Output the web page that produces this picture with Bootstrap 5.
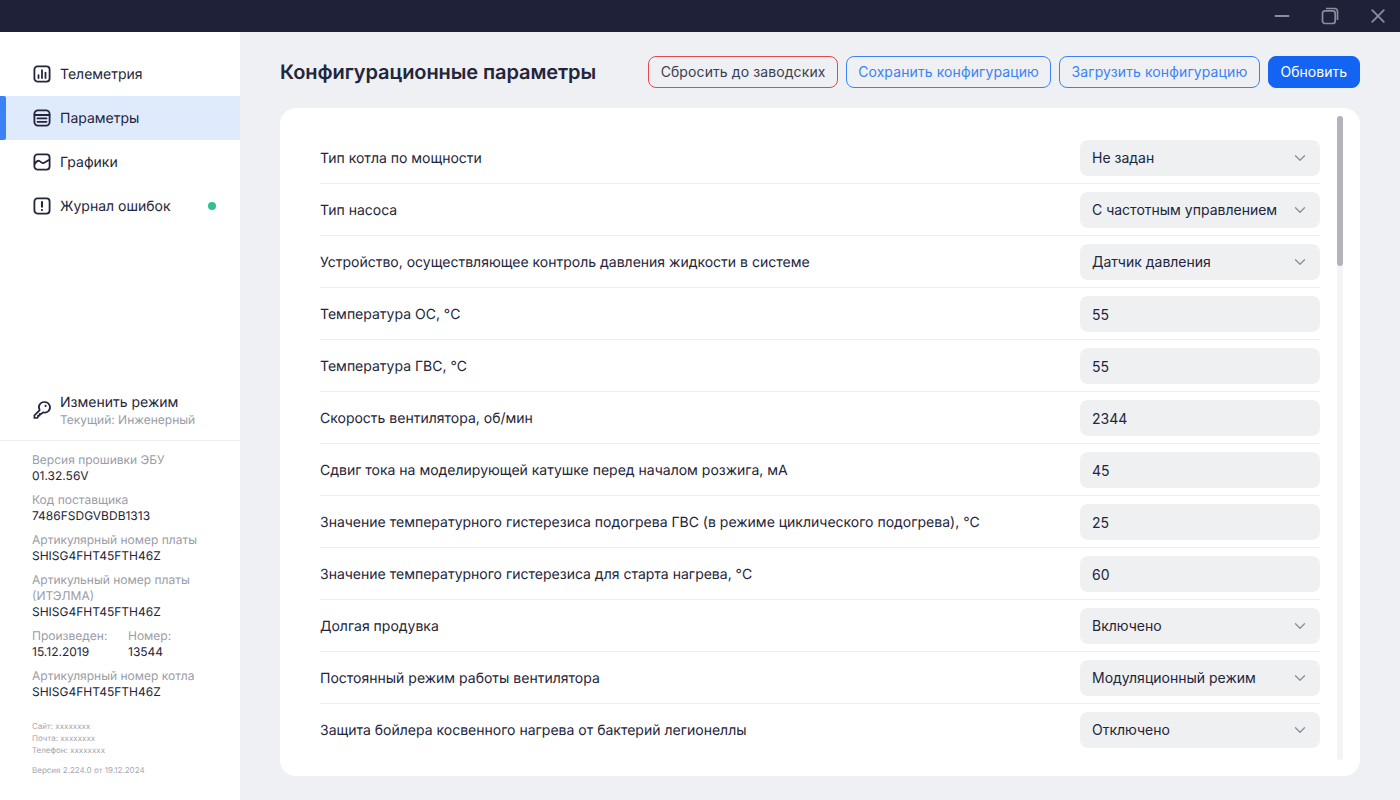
<!DOCTYPE html>
<html lang="ru">
<head>
    <meta charset="UTF-8">
    <title>Конфигурационные параметры</title>
    <link href="https://cdn.jsdelivr.net/npm/bootstrap@5.3.0/dist/css/bootstrap.min.css" rel="stylesheet">
    <style>
        html, body { height: 100%; overflow: hidden; }
        body { font-family: "Inter", "Liberation Sans", sans-serif; font-size: 14px; line-height: 20px; color: #23253a; background: #eef0f3; text-rendering: geometricPrecision; }
        .title-bar { height: 32px; background: #1f2138; gap: 4px; }
        .win-btn { width: 44px; height: 32px; }
        .app-body { height: 768px; }
        .side-panel { width: 240px; background: #fff; }
        .side-nav { padding-top: 20px; }
        .side-link { height: 44px; padding-left: 32px; color: #23253a; text-decoration: none; position: relative; }
        .side-link > span { margin-top: 2px; }
        .side-link.is-active { background: #dfebfd; }
        .side-link.is-active::before { content: ""; position: absolute; left: 0; top: 0; bottom: 0; width: 6px; background: #3b82f6; border-radius: 0 2px 2px 0; }
        .side-link svg { width: 20px; height: 20px; flex: none; }
        .side-link .status-dot { width: 8px; height: 8px; border-radius: 50%; background: #2ec28e; margin: 0 24px 0 0; }
        .mode-box { padding: 0 32px 12px; border-bottom: 1px solid #eceef0; }
        .mode-sub { font-size: 12px; line-height: 16px; color: #9a9ca6; }
        .mode-name { line-height: 20px; padding-top: 1px; margin-bottom: -1px; }
        .info-box { padding: 11px 32px 0; font-size: 12px; line-height: 16px; height: 359px; }
        .info-label { color: #9a9ca6; }
        .info-value { color: #23253a; }
        .info-box .info-item { margin-bottom: 8px; }
        .info-col { width: 96px; }
        .info-foot { font-size: 8px; line-height: 12px; color: #a4a6ae; margin-top: 20px; }
        .info-foot-ver { margin-top: 8px; }
        .main-area { padding: 24px 40px; min-width: 0; }
        .page-title { font-size: 20px; font-weight: 600; line-height: 32px; margin: 0; color: #23253a; letter-spacing: -0.08px; }
        .act-btn { height: 32px; padding: 0 11.3px; font-size: 14px; line-height: 20px; letter-spacing: .1px; border-radius: 8px; background: transparent; white-space: nowrap; }
        .act-reset { border: 1px solid #e5484d; color: #3c3e50; }
        .act-outline { border: 1px solid #3b82f6; color: #3b82f6; }
        .act-primary { border: 1px solid #1464f4; background: #1464f4; color: #fff; padding: 0 12px; letter-spacing: 0; }
        .param-card { height: 668px; margin-top: 20px; background: #fff; border-radius: 16px; padding: 24px 40px 0; position: relative; overflow: hidden; }
        .param-row { height: 52px; padding-top: 8px; border-bottom: 1px solid #eceef0; }
        .param-row:last-child { border-bottom: 0; }
        .param-name { color: #23253a; line-height: 20px; padding-top: 9px; }
        .param-input.form-control, .param-input.form-select { width: 240px; height: 36px; flex: none; background-color: #eef0f2; border: 0; border-radius: 8px; font-size: 14px; line-height: 20px; color: #23253a; padding: 8px 12px; box-shadow: none; }
        .param-input.form-select { padding-right: 36px; background-image: url("data:image/svg+xml,%3csvg xmlns='http://www.w3.org/2000/svg' viewBox='0 0 16 16'%3e%3cpath fill='none' stroke='%238c8e98' stroke-width='1.3' stroke-linecap='round' stroke-linejoin='round' d='M3.5 5.8 8 10.2l4.5-4.4'/%3e%3c/svg%3e"); background-position: right 12px center; background-size: 16px 16px; }
        .scroll-track { position: absolute; left: 1057px; top: 8px; width: 6px; height: 644px; background: #f3f4f5; border-radius: 3px; }
        .scroll-thumb { height: 150px; background: #b3b4ba; border-radius: 3px; }
    </style>
</head>
<body>
    <div class="title-bar d-flex justify-content-end align-items-center">
        <div class="win-btn d-flex align-items-center justify-content-center">
            <svg width="16" height="16" viewBox="0 0 16 16"><path d="M1.5 8h13" stroke="#8b8da0" stroke-width="1.8" stroke-linecap="round"/></svg>
        </div>
        <div class="win-btn d-flex align-items-center justify-content-center">
            <svg width="20" height="20" viewBox="0 0 20 20" fill="none" stroke="#8b8da0" stroke-width="1.7"><rect x="2.5" y="4.8" width="12.7" height="12.7" rx="2.5"/><path d="M6 2.5h8.5a3 3 0 0 1 3 3V14"/></svg>
        </div>
        <div class="win-btn d-flex align-items-center justify-content-center">
            <svg width="16" height="16" viewBox="0 0 16 16"><path d="M2.2 2.2l11.6 11.6M13.8 2.2 2.2 13.8" stroke="#8b8da0" stroke-width="1.8" stroke-linecap="round"/></svg>
        </div>
    </div>

    <div class="app-body d-flex">
        <aside class="side-panel d-flex flex-column flex-shrink-0">
            <nav class="side-nav flex-grow-1">
                <a href="#" class="side-link d-flex align-items-center gap-2">
                    <svg viewBox="0 0 20 20" fill="none" stroke="#23253a" stroke-width="1.8" stroke-linecap="round"><rect x="2.4" y="2.4" width="15.2" height="15.2" rx="3"/><path d="M6.5 14v-2.8M10 14V6.2M13.5 14V8.6"/></svg>
                    <span>Телеметрия</span>
                </a>
                <a href="#" class="side-link is-active d-flex align-items-center gap-2">
                    <svg viewBox="0 0 20 20" fill="none" stroke="#23253a" stroke-width="1.8" stroke-linecap="round"><rect x="2.4" y="2.4" width="15.2" height="15.2" rx="3.5"/><path d="M2.6 7h14.8M5.5 10.4h9M5.5 13.8h9"/></svg>
                    <span>Параметры</span>
                </a>
                <a href="#" class="side-link d-flex align-items-center gap-2">
                    <svg viewBox="0 0 20 20" fill="none" stroke="#23253a" stroke-width="1.8" stroke-linecap="round" stroke-linejoin="round"><rect x="2.4" y="2.4" width="15.2" height="15.2" rx="3"/><path d="M2.6 12c2-3 3.4-3.8 4.8-3 1.5.9 2.3 2.4 4 2 1.8-.4 3.2-2 5.9-3.3"/></svg>
                    <span>Графики</span>
                </a>
                <a href="#" class="side-link d-flex align-items-center gap-2">
                    <svg viewBox="0 0 20 20" fill="none" stroke="#23253a" stroke-width="1.8" stroke-linecap="round"><rect x="2.4" y="2.4" width="15.2" height="15.2" rx="3"/><path d="M10 6v4.8" stroke-width="2.1"/><path d="M10 14v.1" stroke-width="2.1"/></svg>
                    <span class="flex-grow-1">Журнал ошибок</span>
                    <span class="status-dot"></span>
                </a>
            </nav>

            <div class="mode-box d-flex align-items-center gap-2">
                <svg width="20" height="20" viewBox="0 0 20 20" fill="none" stroke="#23253a" stroke-width="1.7" stroke-linecap="round" stroke-linejoin="round" class="flex-shrink-0"><path d="M12.6 2a5.3 5.3 0 0 1 3.8 9.1 5.3 5.3 0 0 1-5.4 1.2l-1.6 1.6H7.7v1.7H6v1.6l-1 .8H2.4v-2.7l5.3-5.2A5.3 5.3 0 0 1 12.6 2z"/><path d="M13.6 5.9v.1" stroke-width="2.1"/></svg>
                <div>
                    <div class="mode-name">Изменить режим</div>
                    <div class="mode-sub">Текущий: Инженерный</div>
                </div>
            </div>

            <div class="info-box">
                <div class="info-item"><div class="info-label">Версия прошивки ЭБУ</div><div class="info-value">01.32.56V</div></div>
                <div class="info-item"><div class="info-label">Код поставщика</div><div class="info-value">7486FSDGVBDB1313</div></div>
                <div class="info-item"><div class="info-label">Артикулярный номер платы</div><div class="info-value">SHISG4FHT45FTH46Z</div></div>
                <div class="info-item"><div class="info-label">Артикульный номер платы (ИТЭЛМА)</div><div class="info-value">SHISG4FHT45FTH46Z</div></div>
                <div class="info-item d-flex">
                    <div class="info-col"><div class="info-label">Произведен:</div><div class="info-value">15.12.2019</div></div>
                    <div><div class="info-label">Номер:</div><div class="info-value">13544</div></div>
                </div>
                <div class="info-item"><div class="info-label">Артикулярный номер котла</div><div class="info-value">SHISG4FHT45FTH46Z</div></div>
                <div class="info-foot">
                    <div>Сайт: xxxxxxxx</div>
                    <div>Почта: xxxxxxxx</div>
                    <div>Телефон: xxxxxxxx</div>
                    <div class="info-foot-ver">Версия 2.224.0 от 19.12.2024</div>
                </div>
            </div>
        </aside>

        <main class="main-area flex-grow-1">
            <div class="d-flex align-items-center justify-content-between">
                <h1 class="page-title">Конфигурационные параметры</h1>
                <div class="d-flex gap-2">
                    <button type="button" class="btn act-btn act-reset">Сбросить до заводских</button>
                    <button type="button" class="btn act-btn act-outline">Сохранить конфигурацию</button>
                    <button type="button" class="btn act-btn act-outline">Загрузить конфигурацию</button>
                    <button type="button" class="btn act-btn act-primary">Обновить</button>
                </div>
            </div>

            <div class="param-card">
                <div id="param-list"></div>
                <div class="scroll-track"><div class="scroll-thumb"></div></div>
            </div>
        </main>
    </div>

    <script>
        const params = [
            ["Тип котла по мощности", "Не задан", true],
            ["Тип насоса", "С частотным управлением", true],
            ["Устройство, осуществляющее контроль давления жидкости в системе", "Датчик давления", true],
            ["Температура ОС, °C", "55"],
            ["Температура ГВС, °C", "55"],
            ["Скорость вентилятора, об/мин", "2344"],
            ["Сдвиг тока на моделирующей катушке перед началом розжига, мА", "45"],
            ["Значение температурного гистерезиса подогрева ГВС (в режиме циклического подогрева), °C", "25"],
            ["Значение температурного гистерезиса для старта нагрева, °C", "60"],
            ["Долгая продувка", "Включено", true],
            ["Постоянный режим работы вентилятора", "Модуляционный режим", true],
            ["Защита бойлера косвенного нагрева от бактерий легионеллы", "Отключено", true]
        ];
        document.getElementById('param-list').innerHTML = params.map(([name, value, isSelect]) => `
            <div class="param-row d-flex justify-content-between">
                <span class="param-name">${name}</span>
                ${isSelect
                    ? `<select class="form-select param-input"><option>${value}</option></select>`
                    : `<input type="text" class="form-control param-input" value="${value}">`}
            </div>`).join('');
    </script>
    <script src="https://cdn.jsdelivr.net/npm/bootstrap@5.3.0/dist/js/bootstrap.bundle.min.js"></script>
</body>
</html>
